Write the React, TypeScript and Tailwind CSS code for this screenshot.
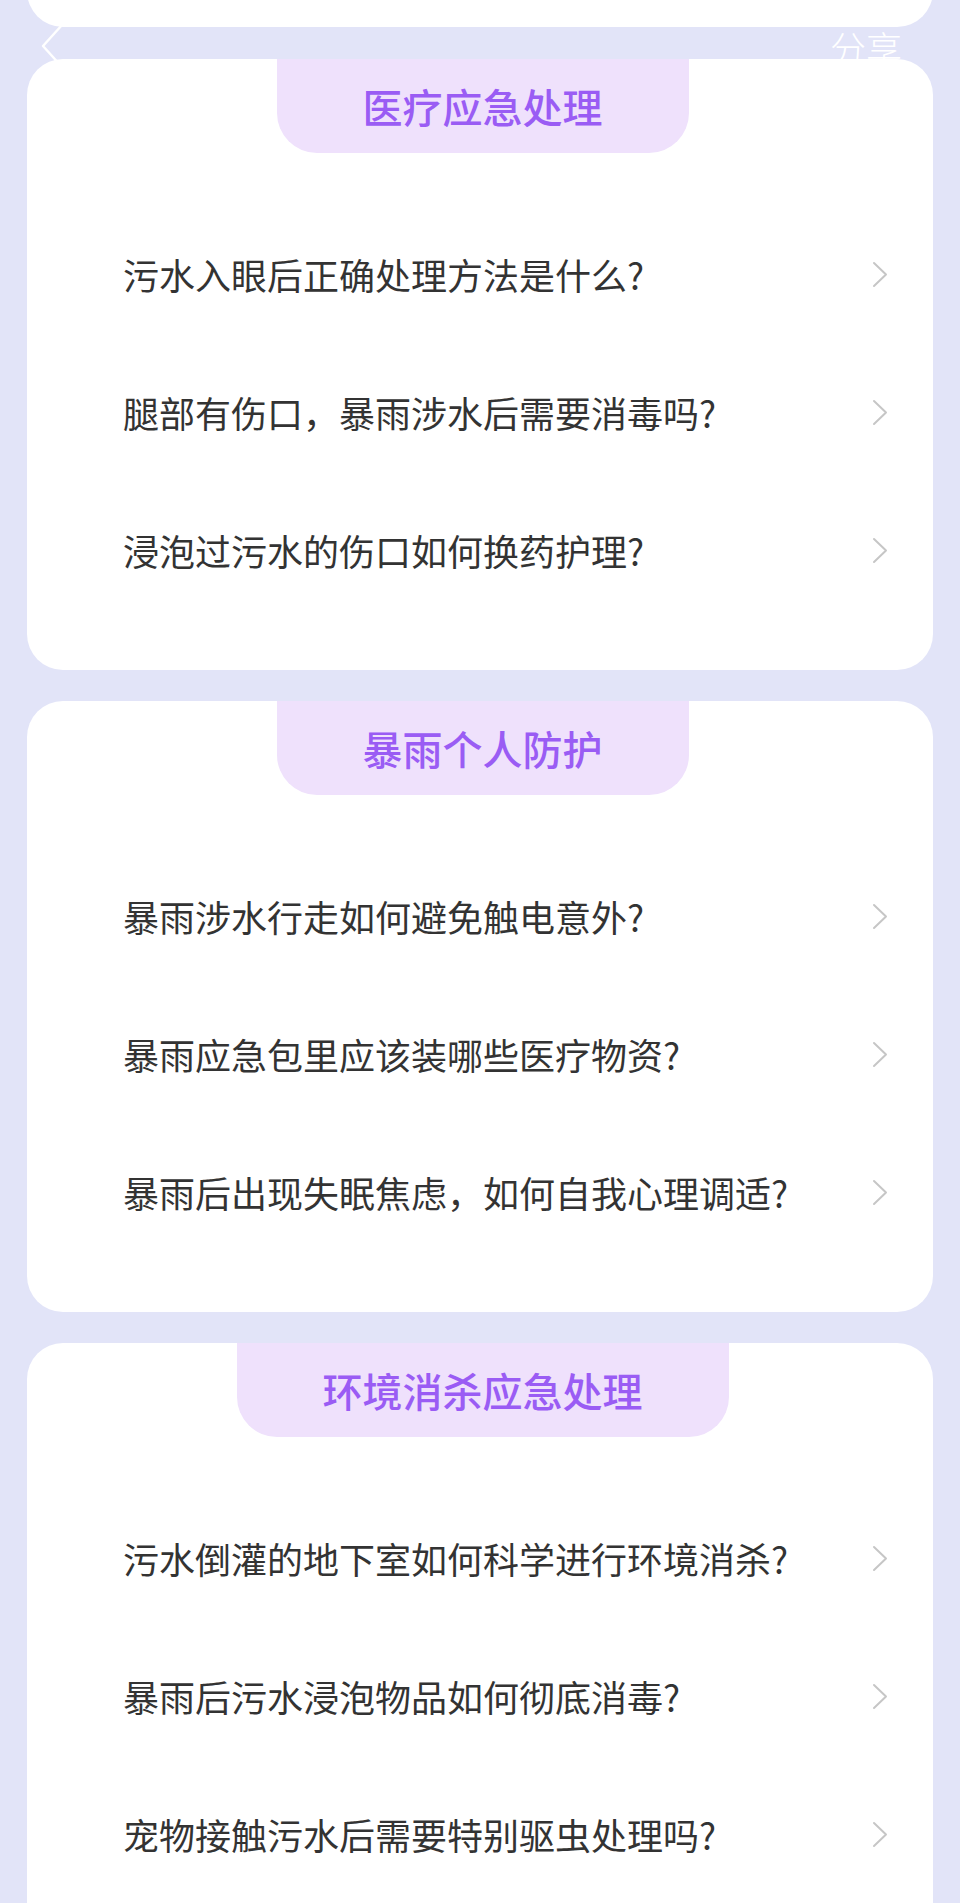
import React from "react";

type Section = { title: string; items: string[] };

const sections: Section[] = [
  {
    title: "医疗应急处理",
    items: ["污水入眼后正确处理方法是什么?", "腿部有伤口，暴雨涉水后需要消毒吗?", "浸泡过污水的伤口如何换药护理?"],
  },
  {
    title: "暴雨个人防护",
    items: ["暴雨涉水行走如何避免触电意外?", "暴雨应急包里应该装哪些医疗物资?", "暴雨后出现失眠焦虑，如何自我心理调适?"],
  },
  {
    title: "环境消杀应急处理",
    items: ["污水倒灌的地下室如何科学进行环境消杀?", "暴雨后污水浸泡物品如何彻底消毒?", "宠物接触污水后需要特别驱虫处理吗?"],
  },
];

function Chevron() {
  return (
    <svg width="16" height="27" viewBox="0 0 16 27" fill="none" className="shrink-0">
      <polyline points="2,2 14,13.5 2,25" stroke="#c6c6c6" strokeWidth="2" strokeLinecap="round" strokeLinejoin="round" />
    </svg>
  );
}

function SectionCard({ section }: { section: Section }) {
  return (
    <div className="mx-[27px] bg-white rounded-[36px] flex flex-col">
      <div className="flex justify-center pl-[5px]">
        <div className="h-[94px] px-[86px] bg-[#efe1fc] rounded-b-[40px] flex items-center text-[40px] leading-none font-medium text-[#9a5cf4]">
          {section.title}
        </div>
      </div>
      <div className="pt-[52px] pb-[51px] flex flex-col">
        {section.items.map((q) => (
          <div key={q} className="h-[138px] pl-[96px] pr-[45px] flex items-center justify-between">
            <span className="text-[36px] leading-none text-[#333333]">{q}</span>
            <Chevron />
          </div>
        ))}
      </div>
    </div>
  );
}

export default function App() {
  return (
    <div
      className="relative h-[1903px] overflow-hidden bg-[#e2e4f8]"
      style={{ fontFamily: '"Noto Sans CJK SC", "Noto Sans", sans-serif' }}
    >
      {/* nav bar sits under the scrolled content */}
      <div className="absolute top-0 left-0 right-0 h-[94px] flex items-center justify-between pl-[40px] pr-[58px]">
        <svg width="26" height="48" viewBox="0 0 26 48" fill="none">
          <polyline points="22,2 3,23 22,44" stroke="white" strokeWidth="2.5" strokeLinecap="round" strokeLinejoin="round" />
        </svg>
        <span className="text-[36px] font-light leading-none text-white">分享</span>
      </div>

      <div className="relative z-10 flex flex-col">
        <div className="-mt-[60px] h-[87px] mx-[27px] bg-white rounded-[36px]" />
        <div className="mt-[32px] flex flex-col gap-[31px]">
          {sections.map((s) => (
            <SectionCard key={s.title} section={s} />
          ))}
        </div>
      </div>
    </div>
  );
}
